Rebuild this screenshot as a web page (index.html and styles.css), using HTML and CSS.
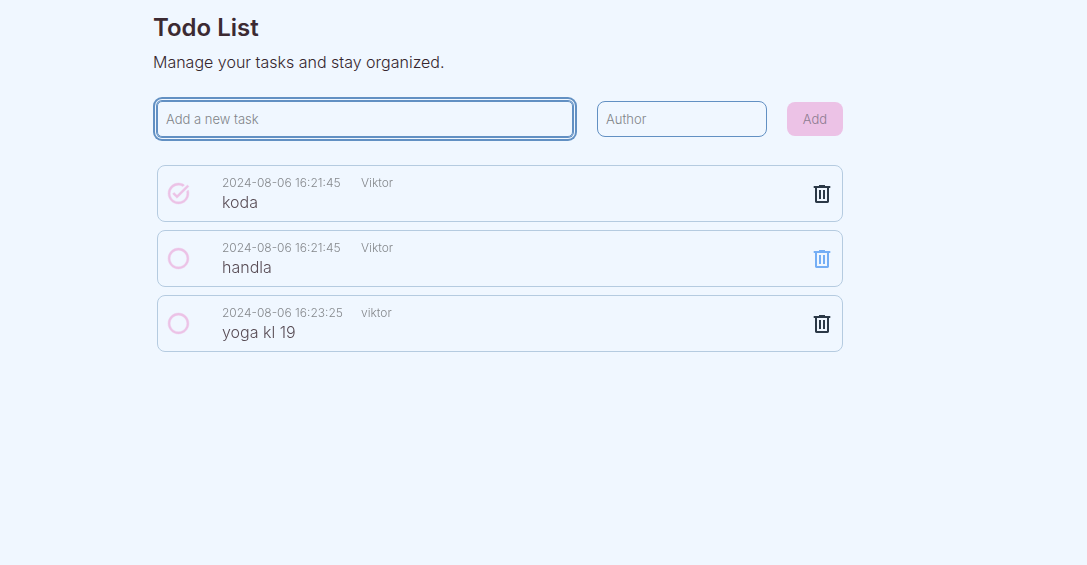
FILE: index.html
```html
<!DOCTYPE html>
<html lang="en">
<head>
<meta charset="utf-8">
<meta name="viewport" content="width=device-width, initial-scale=1">
<title>Todo List</title>
<link rel="stylesheet" href="styles.css">
</head>
<body>
<svg class="sprite" aria-hidden="true">
  <symbol id="icon-done" viewBox="0 0 24 24"><path d="M22 5.18 10.59 16.6l-4.24-4.24 1.41-1.41 2.83 2.83 10-10L22 5.18zm-2.21 5.04c.13.57.21 1.17.21 1.78 0 4.42-3.58 8-8 8s-8-3.58-8-8 3.58-8 8-8c1.58 0 3.04.46 4.28 1.25l1.44-1.44C16.1 2.67 14.13 2 12 2 6.48 2 2 6.48 2 12s4.48 10 10 10 10-4.48 10-10c0-1.19-.22-2.33-.6-3.39l-1.61 1.61z"/></symbol>
  <symbol id="icon-open" viewBox="0 0 24 24"><path d="M12 2C6.48 2 2 6.48 2 12s4.480 10 10 10 10-4.480 10-10S17.520 2 12 2zm0 18c-4.420 0-8-3.580-8-8s3.580-8 8-8 8 3.580 8 8-3.580 8-8 8z"/></symbol>
  <symbol id="icon-trash" viewBox="0 0 24 24"><path d="M6.5 21q-.7 0-1.100-.4Q5 20.200 5 19.500V6H3.700V4H9V3h6v1h5.300v2H19v13.500q0 .7-.4 1.100-.4.4-1.100.4zM17 6H7v13h10zM9 17h2V8H9zm4 0h2V8h-2z"/></symbol>
</svg>
<main class="page">
  <header class="intro">
    <h1 class="title">Todo List</h1>
    <p class="subtitle">Manage your tasks and stay organized.</p>
  </header>
  <form class="task-form">
    <input class="field field-task" type="text" placeholder="Add a new task" aria-label="Task" autofocus>
    <div class="author-group">
      <input class="field field-author" type="text" placeholder="Author" aria-label="Author">
      <button class="add" type="submit" disabled>Add</button>
    </div>
  </form>
  <ul class="tasks">
    <li class="task">
      <label class="toggle"><input class="check" type="checkbox" aria-label="koda" checked><svg class="mark mark-done"><use href="#icon-done"/></svg><svg class="mark mark-open"><use href="#icon-open"/></svg></label>
      <div class="details">
        <p class="meta"><time class="date">2024-08-06 16:21:45</time><span>Viktor</span></p>
        <p class="name">koda</p>
      </div>
      <button class="delete" type="button" aria-label="Delete koda"><svg class="trash"><use href="#icon-trash"/></svg></button>
    </li>
    <li class="task">
      <label class="toggle"><input class="check" type="checkbox" aria-label="handla"><svg class="mark mark-done"><use href="#icon-done"/></svg><svg class="mark mark-open"><use href="#icon-open"/></svg></label>
      <div class="details">
        <p class="meta"><time class="date">2024-08-06 16:21:45</time><span>Viktor</span></p>
        <p class="name">handla</p>
      </div>
      <button class="delete delete-active" type="button" aria-label="Delete handla"><svg class="trash"><use href="#icon-trash"/></svg></button>
    </li>
    <li class="task">
      <label class="toggle"><input class="check" type="checkbox" aria-label="yoga kl 19"><svg class="mark mark-done"><use href="#icon-done"/></svg><svg class="mark mark-open"><use href="#icon-open"/></svg></label>
      <div class="details">
        <p class="meta"><time class="date">2024-08-06 16:23:25</time><span>viktor</span></p>
        <p class="name">yoga kl 19</p>
      </div>
      <button class="delete" type="button" aria-label="Delete yoga kl 19"><svg class="trash"><use href="#icon-trash"/></svg></button>
    </li>
  </ul>
</main>
</body>
</html>
```
FILE: styles.css
```css
:root {
  --bg: #f0f7ff;
  --blue: #6290c3;
  --pink: #ecc2e6;
}

* { box-sizing: border-box; }

body {
  margin: 0;
  background: var(--bg);
  color: #35262e;
  font-family: Inter, "Open Sans", sans-serif;
  font-size: 16px;
  font-weight: 300;
}

.sprite { display: none; }

.page { padding: 12px 244px 24px 153px; }

.title {
  margin: 0;
  color: #3c2a32;
  font-size: 24px;
  line-height: 32px;
  font-weight: 600;
}

.subtitle {
  margin: 6px 0 0;
  line-height: 24px;
}

.task-form {
  display: flex;
  gap: 24px;
  margin: 27px 0 0 4px;
}

.author-group {
  display: flex;
  align-items: center;
  gap: 20px;
}

.field {
  min-width: 0;
  height: 36px;
  padding: 0 8px;
  border: 1px solid var(--blue);
  border-radius: 8px;
  background: transparent;
  color: inherit;
  font: inherit;
  font-size: 13px;
  outline: none;
}

.field::placeholder { color: #808488; opacity: 1; }

.field-task {
  flex: 1;
  border-radius: 5px;
  box-shadow: 0 0 0 1px var(--blue), 0 0 0 2px var(--bg), 0 0 0 4px var(--blue);
}

.field-author { width: 170px; }

.add {
  width: 56px;
  height: 34px;
  padding: 0;
  border: 0;
  border-radius: 8px;
  background: var(--pink);
  color: #8c7c90;
  font: inherit;
  font-size: 13px;
}

.tasks {
  display: flex;
  flex-direction: column;
  gap: 8px;
  margin: 28px 0 0 4px;
  padding: 0;
  list-style: none;
}

.task {
  display: flex;
  align-items: center;
  padding: 7px 8px;
  border: 1px solid #b5cbe0;
  border-radius: 8px;
}

.toggle {
  display: grid;
  margin-right: 31px;
  cursor: pointer;
}

.check,
.mark {
  grid-area: 1 / 1;
  width: 25px;
  height: 25px;
  margin: 0;
}

.check { appearance: none; }

.mark {
  fill: var(--pink);
  stroke: var(--pink);
  stroke-width: 0.4;
  pointer-events: none;
}

.mark-done,
.check:checked ~ .mark-open { display: none; }
.check:checked ~ .mark-done { display: block; }

.details {
  flex: 1;
  padding-bottom: 2px;
}

.meta {
  display: flex;
  margin: 0;
  color: #85888c;
  font-size: 12px;
  line-height: 20px;
}

.date { width: 139px; }

.name {
  margin: 0;
  color: #594d56;
  line-height: 19px;
}

.delete {
  display: flex;
  padding: 0;
  border: 0;
  background: none;
  color: #2c3947;
  cursor: pointer;
}

.delete-active { color: #74aef5; }

.trash {
  width: 24px;
  height: 24px;
  fill: currentColor;
}

@media (max-width: 800px) {
  .page { padding-left: 24px; padding-right: 24px; }
  .task-form { flex-wrap: wrap; }
  .field-task { flex-basis: 100%; }
}
```
